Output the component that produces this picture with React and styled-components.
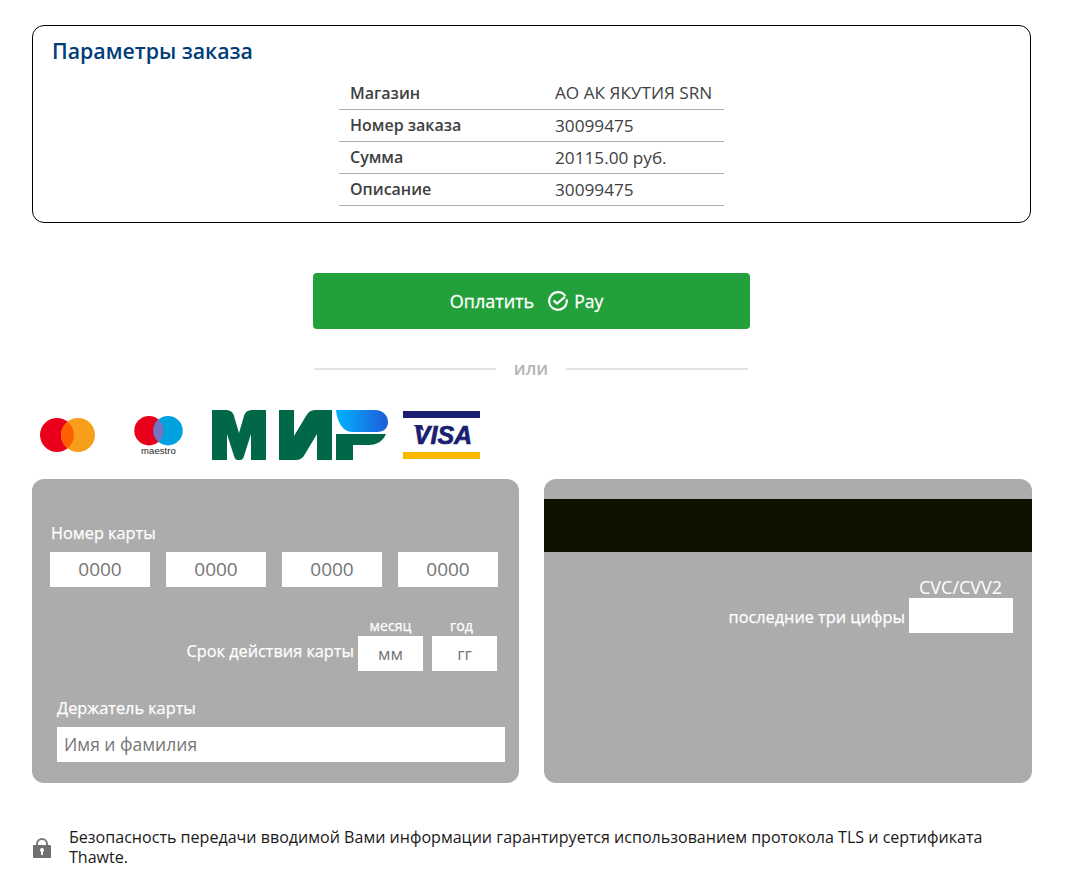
import React from "react";
import styled, { createGlobalStyle } from "styled-components";

const GlobalStyle = createGlobalStyle`
  html, body {
    margin: 0;
    padding: 0;
    background: #fff;
    font-family: "Open Sans", "Noto Sans", sans-serif;
  }
  * {
    box-sizing: border-box;
  }
`;

const rows = [
  ["Магазин", "АО АК ЯКУТИЯ SRN"],
  ["Номер заказа", "30099475"],
  ["Сумма", "20115.00 руб."],
  ["Описание", "30099475"],
];

const App = () => (
  <Page>
    <GlobalStyle />
    <OrderBox>
      <Title>Параметры заказа</Title>
      <OrderTable>
        <tbody>
          {rows.map(([name, value]) => (
            <tr key={name}>
              <NameCell>{name}</NameCell>
              <ValueCell>{value}</ValueCell>
            </tr>
          ))}
        </tbody>
      </OrderTable>
    </OrderBox>

    <PayButton type="button">
      Оплатить
      <SberMark viewBox="0 0 20 20" width="20" height="20">
        <path
          d="M17.4 5.2A8.8 8.8 0 1 0 18.8 10c0-.6 0-1.1-.2-1.6"
          fill="none"
          stroke="#fff"
          strokeWidth="2.1"
        />
        <path
          d="M5.6 9.4l3.4 3.1L17 5.8"
          fill="none"
          stroke="#fff"
          strokeWidth="2.2"
        />
      </SberMark>
      <PayWord>Pay</PayWord>
    </PayButton>

    <Divider>
      <DividerLine />
      <DividerText>или</DividerText>
      <DividerLine />
    </Divider>

    <LogoRow>
      <svg width="90" height="60" viewBox="0 0 90 60">
        <circle cx="25" cy="30" r="17" fill="#eb001b" />
        <circle cx="46" cy="30" r="17" fill="#f79e1b" />
        <path d="M35.5 16.7a17 17 0 0 1 0 26.6a17 17 0 0 1 0-26.6z" fill="#ff5f00" />
      </svg>
      <svg width="80" height="60" viewBox="0 0 80 60">
        <circle cx="27" cy="25.7" r="14.7" fill="#eb001b" />
        <circle cx="46" cy="25.7" r="14.7" fill="#00a1df" />
        <path d="M36.5 14.5a14.7 14.7 0 0 1 0 22.4a14.7 14.7 0 0 1 0-22.4z" fill="#7673c0" />
        <MaestroText x="36.5" y="49" textAnchor="middle">maestro</MaestroText>
      </svg>
      <MirLogo width="176" height="50" viewBox="0 0 176 50">
        <defs>
          <linearGradient id="mirBlue" x1="0" x2="1" y1="0" y2="0">
            <stop offset="0" stopColor="#00b4ff" />
            <stop offset="1" stopColor="#1e5cd8" />
          </linearGradient>
        </defs>
        <path
          d="M0 0H13C18 0 21 2 22 6L27 23L32 6C33 2 36 0 41 0H54V50H39V24L32 46C31 49 30 50 28 50H26C24 50 23 49 22 46L15 24V50H0Z"
          fill="#006848"
        />
        <path
          d="M67 0H82V26L94 6C96 2 99 0 103 0H120V50H105V24L93 44C91 48 88 50 84 50H67Z"
          fill="#006848"
        />
        <path
          d="M124 0H163C171 0 176 6 176 12C176 18 172 22 165 22H140C131 22 125 12 124 0Z"
          fill="url(#mirBlue)"
        />
        <path
          d="M124 24H174C171 31 165 35 157 35H141V50H124Z"
          fill="#006848"
        />
      </MirLogo>
      <VisaLogo width="77" height="48" viewBox="0 0 77 48">
        <rect x="0" y="0" width="77" height="7" fill="#1a1f71" />
        <rect x="0" y="41" width="77" height="7" fill="#fbb800" />
        <VisaText x="40" y="33" textAnchor="middle">VISA</VisaText>
        <path d="M10 14H19L21 20Z" fill="#1a1f71" />
      </VisaLogo>
    </LogoRow>

    <Cards>
      <Card>
        <NumberLabel>Номер карты</NumberLabel>
        <NumberRow>
          {[0, 1, 2, 3].map((n) => (
            <Field key={n} width={100} center placeholder="0000" />
          ))}
        </NumberRow>
        <ExpiryRow>
          <ExpiryLabel>Срок действия карты</ExpiryLabel>
          <ExpiryPart>
            <SmallLabel>месяц</SmallLabel>
            <Field width={65} center placeholder="мм" />
          </ExpiryPart>
          <ExpiryPart>
            <SmallLabel shift={6}>год</SmallLabel>
            <Field width={65} center placeholder="гг" />
          </ExpiryPart>
        </ExpiryRow>
        <HolderBlock>
          <CardLabel>Держатель карты</CardLabel>
          <Field width={448} placeholder="Имя и фамилия" />
        </HolderBlock>
      </Card>

      <BackCard>
        <Stripe />
        <CvcBlock>
          <CvcTitle>CVC/CVV2</CvcTitle>
          <CvcRow>
            <CvcHint>последние три цифры</CvcHint>
            <Field width={104} />
          </CvcRow>
        </CvcBlock>
      </BackCard>
    </Cards>

    <Notice>
      <svg width="18" height="20" viewBox="0 0 18 20">
        <path
          d="M4 9V6a5 5 0 0 1 10 0v3"
          fill="none"
          stroke="#777"
          strokeWidth="2"
        />
        <path
          d="M1 7h16a1 1 0 0 1 1 1v11a1 1 0 0 1-1 1H1a1 1 0 0 1-1-1V8a1 1 0 0 1 1-1z"
          fill="#6f6f6f"
        />
        <circle cx="9" cy="12" r="2" fill="#fff" />
        <rect x="8" y="12.5" width="2" height="4.5" fill="#fff" />
      </svg>
      <NoticeText>
        Безопасность передачи вводимой Вами информации гарантируется
        использованием протокола TLS и сертификата Thawte.
      </NoticeText>
    </Notice>
  </Page>
);

export default App;

const Page = styled.div`
  width: 1078px;
  padding: 25px 46px 0 32px;
  display: flex;
  flex-direction: column;
  color: #3f3f3f;
`;

const OrderBox = styled.section`
  width: 999px;
  height: 198px;
  border: 1px solid #000;
  border-radius: 12px;
  padding: 11px 19px 0;
`;

const Title = styled.h2`
  margin: 0;
  height: 30px;
  font-size: 21.3px;
  line-height: 28px;
  font-weight: 600;
  color: #003d79;
`;

const OrderTable = styled.table`
  width: 385px;
  margin: 10px 0 0 287px;
  border-collapse: collapse;

  td {
    height: 32px;
    padding: 0 0 0 11px;
    border-bottom: 1px solid #adadad;
  }
`;

const NameCell = styled.td`
  width: 205px;
  font-size: 16px;
  font-weight: 600;
`;

const ValueCell = styled.td`
  font-size: 17.2px;
  font-weight: 400;
`;

const PayButton = styled.button`
  display: flex;
  align-items: center;
  justify-content: center;
  width: 437px;
  height: 56px;
  margin: 50px 0 0 281px;
  padding: 0 10px 0 0;
  border: 0;
  border-radius: 4px;
  background: #22a03a;
  color: #fff;
  font-family: inherit;
  font-size: 18px;
  -webkit-text-stroke: 0.3px #fff;
`;

const SberMark = styled.svg`
  margin: 0 6px 0 14px;
`;

const PayWord = styled.span`
  font-size: 17.5px;
`;

const Divider = styled.div`
  display: flex;
  align-items: center;
  width: 434px;
  height: 24px;
  margin: 28px 0 0 282px;
`;

const DividerLine = styled.div`
  flex: 1;
  height: 2px;
  background: #e3e3e3;
`;

const DividerText = styled.span`
  width: 70px;
  margin-bottom: 3px;
  text-align: center;
  font-size: 17.5px;
  line-height: 22px;
  font-weight: 600;
  color: #b5b5b5;
`;

const LogoRow = styled.div`
  display: flex;
  align-items: flex-start;
  height: 60px;
  margin-top: 24px;
`;

const MaestroText = styled.text`
  font-family: "Liberation Sans", sans-serif;
  font-size: 9.5px;
  letter-spacing: 0.1px;
  fill: #231f20;
`;

const MirLogo = styled.svg`
  margin: 5px 0 0 10px;
  flex: none;
`;

const VisaLogo = styled.svg`
  margin: 6px 0 0 15px;
  flex: none;
`;

const VisaText = styled.text`
  font-family: "Liberation Sans", sans-serif;
  font-size: 25px;
  font-weight: 700;
  font-style: italic;
  fill: #1a1f71;
  stroke: #1a1f71;
  stroke-width: 0.7px;
`;

const Cards = styled.div`
  display: flex;
  gap: 25px;
  margin-top: 14px;
`;

const Card = styled.div`
  width: 487px;
  height: 304px;
  padding: 44px 18px 0;
  border-radius: 12px;
  background: #acacac;
  color: #fff;
`;

const CardLabel = styled.div`
  font-size: 16.3px;
  line-height: 20px;
  color: #fff;
  -webkit-text-stroke: 0.25px #fff;
`;

const NumberLabel = styled(CardLabel)`
  padding-left: 1px;
`;

const Field = styled.input.attrs({ type: "text" })`
  display: block;
  width: ${(p) => p.width}px;
  height: 35px;
  border: 0;
  border-radius: 0;
  padding: 0 7px 1px;
  background: #fff;
  font-family: inherit;
  font-size: ${(p) => (p.center ? 19 : 17.5)}px;
  text-align: ${(p) => (p.center ? "center" : "left")};
  outline: none;

  &::placeholder {
    color: #757575;
    opacity: 1;
  }
`;

const NumberRow = styled.div`
  display: flex;
  gap: 16px;
  margin-top: 9px;
`;

const ExpiryRow = styled.div`
  display: flex;
  align-items: flex-end;
  justify-content: flex-end;
  gap: 4px;
  width: 447px;
  margin-top: 29px;

  input {
    font-size: 17px;
  }
`;

const ExpiryLabel = styled(CardLabel)`
  padding-bottom: 10px;
`;

const ExpiryPart = styled.div`
  display: flex;
  flex-direction: column;
  align-items: center;

  & + & {
    margin-left: 5px;
  }
`;

const SmallLabel = styled.div`
  padding-right: ${(p) => p.shift || 0}px;
  font-size: 14.2px;
  line-height: 20px;
  -webkit-text-stroke: 0.25px #fff;
`;

const HolderBlock = styled.div`
  display: flex;
  flex-direction: column;
  gap: 9px;
  margin: 27px 0 0 7px;
`;

const BackCard = styled(Card)`
  width: 488px;
  padding: 20px 0 0;
`;

const Stripe = styled.div`
  height: 53px;
  background: #111100;
`;

const CvcBlock = styled.div`
  display: flex;
  flex-direction: column;
  align-items: flex-end;
  padding: 25px 19px 0 0;
`;

const CvcTitle = styled(CardLabel)`
  width: 94px;
  font-size: 18px;
  line-height: 21px;
  -webkit-text-stroke: 0;
`;

const CvcRow = styled.div`
  display: flex;
  align-items: center;
  gap: 4px;
`;

const CvcHint = styled(CardLabel)`
  padding-top: 2px;
`;

const Notice = styled.div`
  display: flex;
  align-items: center;
  gap: 18px;
  margin: 44px 0 0 1px;
  color: #1a1a1a;

  svg {
    flex: none;
    margin-top: 2px;
  }
`;

const NoticeText = styled.p`
  margin: 0;
  font-size: 16.07px;
  line-height: 20px;
`;
